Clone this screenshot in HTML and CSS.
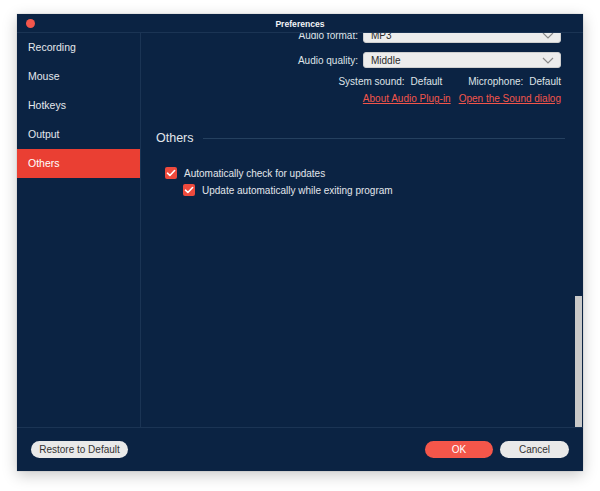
FILE: index.html
```html
<!DOCTYPE html>
<html>
<head>
<meta charset="utf-8">
<link rel="stylesheet" href="styles.css">
</head>
<body>
<div class="window">
  <div class="titlebar">
    <div class="traffic"><span class="dot"></span></div>
    <div class="title">Preferences</div>
    <div></div>
  </div>
  <div class="main">
    <nav class="sidebar">
      <div class="nav-item">Recording</div>
      <div class="nav-item">Mouse</div>
      <div class="nav-item">Hotkeys</div>
      <div class="nav-item">Output</div>
      <div class="nav-item active">Others</div>
    </nav>
    <div class="content">
      <div class="scroller">
        <div class="field-row">
          <span class="label">Audio format:</span>
          <div class="select"><span>MP3</span><svg class="chev" width="12" height="7" viewBox="0 0 12 7"><path d="M1 1l5 5 5-5" fill="none" stroke="#8a8a8a" stroke-width="1.2"/></svg></div>
        </div>
        <div class="field-row">
          <span class="label">Audio quality:</span>
          <div class="select"><span>Middle</span><svg class="chev" width="12" height="7" viewBox="0 0 12 7"><path d="M1 1l5 5 5-5" fill="none" stroke="#8a8a8a" stroke-width="1.2"/></svg></div>
        </div>
        <div class="info-row">
          <span class="pair"><span>System sound:</span><span>Default</span></span>
          <span class="pair"><span>Microphone:</span><span>Default</span></span>
        </div>
        <div class="links-row">
          <a class="link">About Audio Plug-in</a>
          <a class="link">Open the Sound dialog</a>
        </div>
        <div class="section-head">
          <span class="section-title">Others</span>
          <span class="section-line"></span>
        </div>
        <label class="check-row">
          <span class="checkbox"><svg width="10" height="8" viewBox="0 0 10 8"><path d="M1.5 4.2l2.4 2.3L8.6 1.5" fill="none" stroke="#fff" stroke-width="1.6" stroke-linecap="round" stroke-linejoin="round"/></svg></span>
          <span>Automatically check for updates</span>
        </label>
        <label class="check-row sub">
          <span class="checkbox"><svg width="10" height="8" viewBox="0 0 10 8"><path d="M1.5 4.2l2.4 2.3L8.6 1.5" fill="none" stroke="#fff" stroke-width="1.6" stroke-linecap="round" stroke-linejoin="round"/></svg></span>
          <span>Update automatically while exiting program</span>
        </label>
      </div>
      <div class="scrollbar"></div>
    </div>
  </div>
  <div class="footer">
    <button class="btn light">Restore to Default</button>
    <div class="footer-right">
      <button class="btn primary">OK</button>
      <button class="btn light cancel">Cancel</button>
    </div>
  </div>
</div>
</body>
</html>
```
FILE: styles.css
```css
* { box-sizing: border-box; }
html, body { margin: 0; padding: 0; background: #ffffff; }
body {
  font-family: "Liberation Sans", Arial, sans-serif;
  width: 600px;
  height: 491px;
  padding: 14px 17px 20px 17px;
}
.window {
  width: 566px;
  height: 457px;
  background: #0b2343;
  display: flex;
  flex-direction: column;
  box-shadow: 0 4px 14px rgba(0,0,0,0.22), 0 0 1px rgba(0,0,0,0.3);
  color: #dfe3e8;
}
.titlebar {
  height: 19px;
  border-bottom: 1px solid #1b3454;
  display: grid;
  grid-template-columns: 1fr auto 1fr;
  align-items: center;
}
.traffic { padding-left: 9px; display: flex; align-items: center; }
.dot {
  width: 9px; height: 9px; border-radius: 50%;
  background: #f4564c;
  margin-top: 1px;
}
.title {
  font-size: 8.6px;
  font-weight: bold;
  color: #f2f4f7;
  padding-top: 1px;
}
.main {
  flex: 1;
  display: flex;
  min-height: 0;
}
.sidebar {
  width: 124px;
  border-right: 1px solid #1b3454;
  display: flex;
  flex-direction: column;
}
.nav-item {
  height: 29px;
  display: flex;
  align-items: center;
  padding-left: 11px;
  padding-bottom: 1px;
  font-size: 10.5px;
  color: #e4e8ed;
}
.nav-item.active {
  background: #ea3f33;
  color: #ffffff;
}
.content {
  flex: 1;
  position: relative;
  overflow: hidden;
}
.scroller {
  margin-top: -6px;
  padding: 0 22px 0 15px;
  display: flex;
  flex-direction: column;
}
.field-row {
  display: flex;
  justify-content: flex-end;
  align-items: center;
  gap: 5px;
  height: 16px;
  margin-bottom: 9px;
  font-size: 10px;
  color: #dfe3e8;
}
.select {
  width: 198px;
  height: 16px;
  background: #ececec;
  border-radius: 3px;
  border: 1px solid #cfcfcf;
  display: flex;
  align-items: center;
  justify-content: space-between;
  padding: 0 6px 0 7px;
  color: #2a2a2a;
  font-size: 10px;
}
.chev { display: block; }
.info-row {
  display: flex;
  justify-content: flex-end;
  gap: 26px;
  font-size: 10px;
  height: 13px;
  align-items: center;
  margin-top: -2px;
  color: #dfe3e8;
}
.pair { display: flex; gap: 6px; }
.links-row {
  display: flex;
  justify-content: flex-end;
  gap: 8px;
  font-size: 10px;
  height: 13px;
  align-items: center;
  margin-top: 4px;
}
.link {
  color: #f2554a;
  text-decoration: underline;
  text-underline-offset: 1px;
}
.section-head {
  display: flex;
  align-items: center;
  gap: 9px;
  margin-top: 25px;
  height: 16px;
  margin-right: -4px;
}
.section-title {
  font-size: 12.5px;
  color: #e2e6eb;
}
.section-line {
  flex: 1;
  height: 1px;
  background: #25405f;
}
.check-row {
  display: flex;
  align-items: center;
  gap: 7px;
  font-size: 10px;
  color: #e2e6eb;
  height: 12px;
  padding-left: 9px;
  margin-top: 21px;
}
.check-row.sub {
  padding-left: 27px;
  margin-top: 5px;
}
.checkbox {
  width: 12px;
  height: 12px;
  border-radius: 2px;
  background: #ee4a3d;
  display: flex;
  align-items: center;
  justify-content: center;
}
.checkbox svg { display: block; }
.scrollbar {
  position: absolute;
  right: 1px;
  bottom: 0;
  width: 7px;
  height: 131px;
  background: #c9c9c9;
}
.footer {
  height: 44px;
  border-top: 1px solid #1b3454;
  display: flex;
  align-items: center;
  justify-content: space-between;
  padding: 0 14px 0 14px;
}
.footer-right { display: flex; gap: 7px; }
.btn {
  height: 17px;
  border-radius: 9px;
  border: none;
  font-family: "Liberation Sans", Arial, sans-serif;
  font-size: 10px;
  padding: 0;
  display: flex;
  align-items: center;
  justify-content: center;
}
.btn.light {
  background: #e9e9e9;
  color: #333333;
  width: 97px;
}
.btn.cancel { width: 69px; }
.btn.primary {
  background: #f4564a;
  color: #ffffff;
  width: 68px;
}
```
